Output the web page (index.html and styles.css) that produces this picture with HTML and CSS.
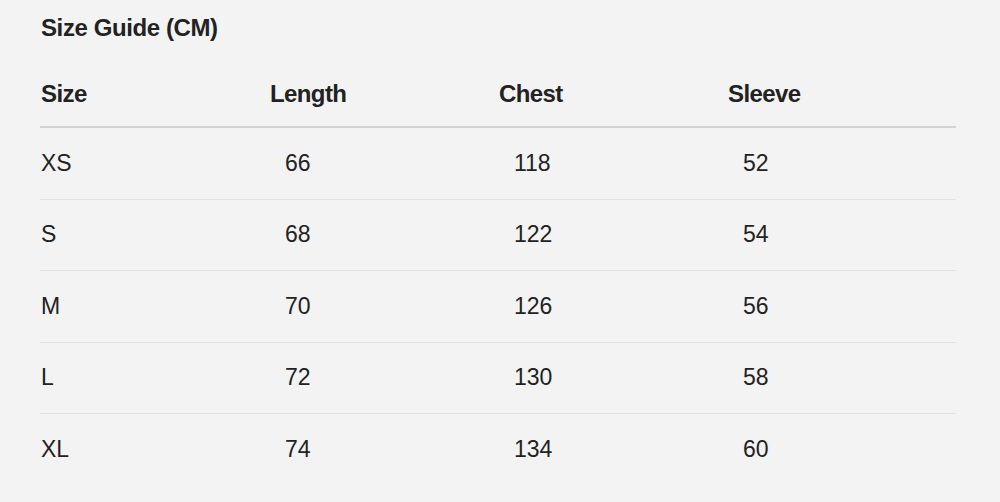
FILE: index.html
```html
<!DOCTYPE html>
<html lang="en">
<head>
<meta charset="utf-8">
<title>Size Guide</title>
<link rel="stylesheet" href="styles.css">
</head>
<body>
<div class="guide">
  <h2 class="title">Size Guide (CM)</h2>
  <table class="sizes">
    <thead>
      <tr><th>Size</th><th>Length</th><th>Chest</th><th>Sleeve</th></tr>
    </thead>
    <tbody>
      <tr><td>XS</td><td class="num">66</td><td class="num">118</td><td class="num">52</td></tr>
      <tr><td>S</td><td class="num">68</td><td class="num">122</td><td class="num">54</td></tr>
      <tr><td>M</td><td class="num">70</td><td class="num">126</td><td class="num">56</td></tr>
      <tr><td>L</td><td class="num">72</td><td class="num">130</td><td class="num">58</td></tr>
      <tr><td>XL</td><td class="num">74</td><td class="num">134</td><td class="num">60</td></tr>
    </tbody>
  </table>
</div>
</body>
</html>
```
FILE: styles.css
```css
html, body {
  margin: 0;
  padding: 0;
  background: #f3f3f3;
}
body {
  font-family: "Liberation Sans", Arial, sans-serif;
  color: #222222;
}
.guide {
  padding: 14px 0 0 40px;
  width: 916px;
}
.title {
  margin: 0;
  padding-left: 1px;
  font-size: 24px;
  line-height: 28px;
  font-weight: bold;
  letter-spacing: -0.4px;
}
.sizes {
  margin-top: 20px;
  width: 916px;
  border-collapse: collapse;
  table-layout: fixed;
}
.sizes th {
  text-align: left;
  font-size: 24px;
  font-weight: bold;
  letter-spacing: -0.6px;
  height: 64px;
  padding: 0 0 0 1px;
  vertical-align: middle;
  border-bottom: 2px solid #d3d3d3;
}
.sizes td {
  font-size: 23px;
  letter-spacing: -0.1px;
  height: 70.5px;
  padding: 0 0 0 1px;
  vertical-align: middle;
  border-bottom: 1.5px solid #e2e2e2;
}
.sizes tbody tr:last-child td {
  border-bottom: none;
}
.sizes td.num {
  padding-left: 16px;
}
```
